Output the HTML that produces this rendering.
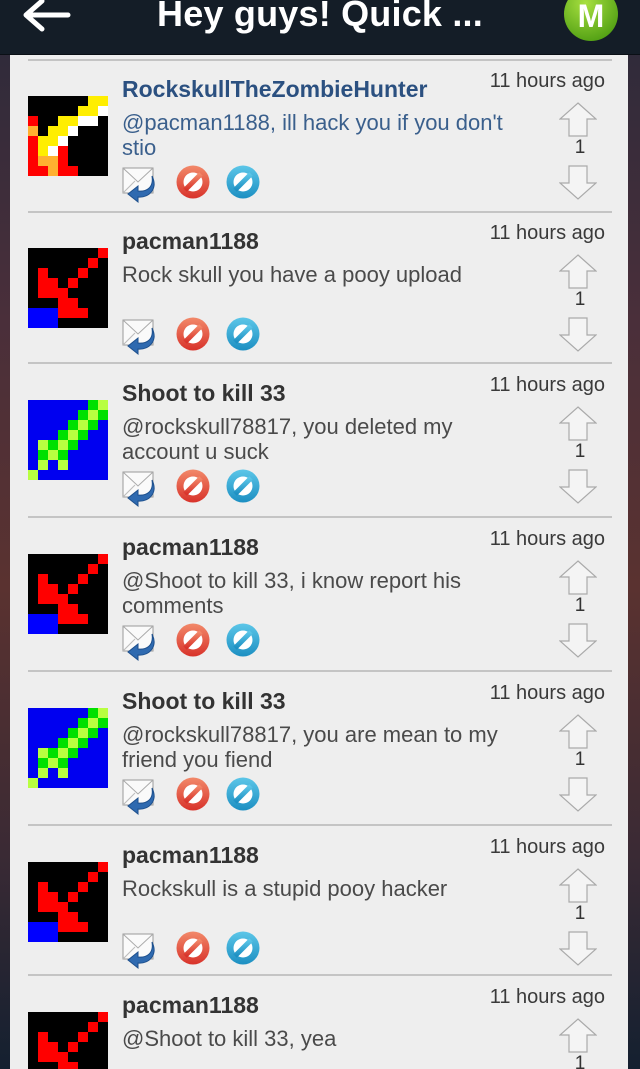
<!DOCTYPE html>
<html><head><meta charset="utf-8">
<style>
*{margin:0;padding:0;box-sizing:border-box}
html,body{width:640px;height:1069px;overflow:hidden}
body{position:relative;font-family:"Liberation Sans",Arial,sans-serif;
background:linear-gradient(#2b2a3a 0%,#4a2f3a 30%,#5a3230 55%,#3a2a34 80%,#142030 100%)}
.hdr{position:absolute;left:0;top:0;width:640px;height:55px;background:#141d27;border-bottom:1px solid #0a0f15}
.title{position:absolute;left:0;width:640px;top:-7px;text-align:center;color:#fff;font-size:36px;font-weight:bold;letter-spacing:0.2px}
.card{position:absolute;left:10px;top:55px;width:618px;height:1014px;background:#eeeeee}
.sep{position:absolute;left:28px;width:584px;height:2px;background:#c4c4c4}
.e{position:absolute;left:0;width:640px;height:152px}
.av{position:absolute;left:28px;top:36px;width:80px;height:80px}
.nm{position:absolute;left:122px;top:16px;font-size:23px;font-weight:bold;color:#333;line-height:26px;white-space:nowrap}
.cm{position:absolute;left:122px;top:50px;font-size:22px;color:#4a4a4a;line-height:25px;width:420px;white-space:nowrap}
.tm{position:absolute;right:35px;top:10px;font-size:20px;color:#3a3a3a;white-space:nowrap}
.ic{position:absolute;top:104px;left:122px}
.up{position:absolute;left:559px;top:42px}
.dn{position:absolute;left:559px;top:105px}
.ct{position:absolute;left:568px;width:24px;text-align:center;top:77px;font-size:19px;color:#333}
</style></head><body>
<svg width="0" height="0" style="position:absolute">
<defs>
<linearGradient id="rg" x1="0" y1="0" x2="0" y2="1"><stop offset="0" stop-color="#f2896a"/><stop offset="1" stop-color="#d8322a"/></linearGradient>
<linearGradient id="bg" x1="0" y1="0" x2="0" y2="1"><stop offset="0" stop-color="#5cc6e8"/><stop offset="1" stop-color="#1c8fc2"/></linearGradient>
<symbol id="icons" viewBox="0 0 140 40">
<rect x="1" y="4" width="30" height="25" fill="#fafafa" stroke="#999" stroke-width="1"/>
<path d="M1 4 L16 18 L31 4" fill="none" stroke="#aaa" stroke-width="1"/>
<path d="M1 29 L13 17" stroke="#bbb" fill="none"/>
<path d="M30 12 C32 24 24 28 16 27 L16 22 L6 30 L16 38 L16 33 C28 34 36 24 30 12 Z" fill="#2f6ab0" stroke="#1d4f8c" stroke-width="1"/>
<circle cx="71" cy="18" r="16.5" fill="url(#rg)"/>
<circle cx="71" cy="18" r="9.5" fill="#fff"/>
<path d="M63 26 L79 10" stroke="url(#rg)" stroke-width="5"/>
<circle cx="121" cy="18" r="16.5" fill="url(#bg)"/>
<circle cx="121" cy="18" r="9.5" fill="#fff"/>
<path d="M113 26 L129 10" stroke="url(#bg)" stroke-width="5"/>
</symbol>
<symbol id="ua" viewBox="0 0 38 35"><path d="M19 1 L37 17 L28 17 L28 34 L10 34 L10 17 L1 17 Z" fill="#f4f4f4" stroke="#aaa" stroke-width="1.2"/></symbol>
<symbol id="da" viewBox="0 0 38 35"><path d="M10 1 L28 1 L28 18 L37 18 L19 34 L1 18 L10 18 Z" fill="#f4f4f4" stroke="#aaa" stroke-width="1.2"/></symbol>
<symbol id="pac" viewBox="0 0 8 8" shape-rendering="crispEdges">
<rect width="8" height="8" fill="#000"/>
<g fill="#f00"><rect x="7" y="0" width="1" height="1"/><rect x="6" y="1" width="1" height="1"/><rect x="1" y="2" width="1" height="1"/><rect x="5" y="2" width="1" height="1"/><rect x="1" y="3" width="2" height="1"/><rect x="4" y="3" width="1" height="1"/><rect x="1" y="4" width="3" height="1"/><rect x="3" y="5" width="2" height="1"/><rect x="3" y="6" width="3" height="1"/></g>
<rect x="0" y="6" width="3" height="2" fill="#00f"/>
</symbol>
<symbol id="sho" viewBox="0 0 8 8" shape-rendering="crispEdges">
<rect width="8" height="8" fill="#0000f0"/>
<g fill="#00e000"><rect x="6" y="0" width="1" height="1"/><rect x="5" y="1" width="1" height="1"/><rect x="7" y="1" width="1" height="1"/><rect x="4" y="2" width="1" height="1"/><rect x="6" y="2" width="1" height="1"/><rect x="3" y="3" width="1" height="1"/><rect x="5" y="3" width="1" height="1"/><rect x="2" y="4" width="1" height="1"/><rect x="4" y="4" width="1" height="1"/><rect x="1" y="5" width="1" height="1"/><rect x="3" y="5" width="1" height="1"/></g>
<g fill="#b8ff40"><rect x="7" y="0" width="1" height="1"/><rect x="6" y="1" width="1" height="1"/><rect x="5" y="2" width="1" height="1"/><rect x="4" y="3" width="1" height="1"/><rect x="1" y="4" width="1" height="1"/><rect x="3" y="4" width="1" height="1"/><rect x="2" y="5" width="1" height="1"/><rect x="1" y="6" width="1" height="1"/><rect x="3" y="6" width="1" height="1"/><rect x="0" y="7" width="1" height="1"/></g>
</symbol>
<symbol id="rock" viewBox="0 0 8 8" shape-rendering="crispEdges">
<rect width="8" height="8" fill="#000"/>
<g fill="#ffee00"><rect x="6" y="0" width="2" height="1"/><rect x="5" y="1" width="2" height="1"/><rect x="3" y="2" width="2" height="1"/><rect x="2" y="3" width="2" height="1"/><rect x="1" y="4" width="2" height="1"/><rect x="1" y="5" width="1" height="1"/></g>
<g fill="#fff"><rect x="7" y="1" width="1" height="1"/><rect x="5" y="2" width="2" height="1"/><rect x="4" y="3" width="1" height="1"/><rect x="3" y="4" width="1" height="1"/><rect x="2" y="5" width="1" height="1"/></g>
<g fill="#f00"><rect x="0" y="2" width="1" height="1"/><rect x="0" y="4" width="1" height="4"/><rect x="3" y="5" width="1" height="3"/><rect x="1" y="7" width="1" height="1"/><rect x="4" y="7" width="1" height="1"/></g>
<g fill="#ffb030"><rect x="0" y="3" width="1" height="1"/><rect x="1" y="6" width="2" height="1"/><rect x="2" y="7" width="1" height="1"/></g>
</symbol>
</defs></svg>

<div class="card"></div>
<div class="hdr">
<svg style="position:absolute;left:20px;top:0" width="52" height="34" viewBox="0 0 52 34"><path d="M48 15 L8 15 M22 1 L6 15 L22 29" stroke="#fff" stroke-width="5" fill="none" stroke-linecap="round" stroke-linejoin="round"/></svg>
<div class="title">Hey guys! Quick ...</div>
<svg style="position:absolute;left:562px;top:-14px" width="58" height="56" viewBox="0 0 58 56"><defs><radialGradient id="gg" cx="0.4" cy="0.3" r="0.8"><stop offset="0" stop-color="#a8e040"/><stop offset="1" stop-color="#4a9a10"/></radialGradient></defs><ellipse cx="29" cy="28" rx="27" ry="27" fill="url(#gg)"/><text x="29" y="41" text-anchor="middle" font-family="Liberation Sans" font-weight="bold" font-size="32" fill="#fff">M</text></svg>
</div>

<div class="sep" style="top:59px"></div>
<div class="sep" style="top:211px"></div>
<div class="sep" style="top:362px"></div>
<div class="sep" style="top:516px"></div>
<div class="sep" style="top:670px"></div>
<div class="sep" style="top:824px"></div>
<div class="sep" style="top:974px"></div>

<div class="e" style="top:60px">
<svg class="av"><use href="#rock"/></svg>
<div class="nm" style="color:#2b5080">RockskullTheZombieHunter</div>
<div class="cm" style="color:#3a5f8c">@pacman1188, ill hack you if you don't<br>stio</div>
<div class="tm">11 hours ago</div>
<svg class="ic" width="140" height="40"><use href="#icons"/></svg>
<svg class="up" width="38" height="35"><use href="#ua"/></svg><div class="ct">1</div><svg class="dn" width="38" height="35"><use href="#da"/></svg>
</div>

<div class="e" style="top:212px">
<svg class="av"><use href="#pac"/></svg>
<div class="nm">pacman1188</div>
<div class="cm">Rock skull you have a pooy upload</div>
<div class="tm">11 hours ago</div>
<svg class="ic" width="140" height="40"><use href="#icons"/></svg>
<svg class="up" width="38" height="35"><use href="#ua"/></svg><div class="ct">1</div><svg class="dn" width="38" height="35"><use href="#da"/></svg>
</div>

<div class="e" style="top:364px">
<svg class="av"><use href="#sho"/></svg>
<div class="nm">Shoot to kill 33</div>
<div class="cm">@rockskull78817, you deleted my<br>account u suck</div>
<div class="tm">11 hours ago</div>
<svg class="ic" width="140" height="40"><use href="#icons"/></svg>
<svg class="up" width="38" height="35"><use href="#ua"/></svg><div class="ct">1</div><svg class="dn" width="38" height="35"><use href="#da"/></svg>
</div>

<div class="e" style="top:518px">
<svg class="av"><use href="#pac"/></svg>
<div class="nm">pacman1188</div>
<div class="cm">@Shoot to kill 33, i know report his<br>comments</div>
<div class="tm">11 hours ago</div>
<svg class="ic" width="140" height="40"><use href="#icons"/></svg>
<svg class="up" width="38" height="35"><use href="#ua"/></svg><div class="ct">1</div><svg class="dn" width="38" height="35"><use href="#da"/></svg>
</div>

<div class="e" style="top:672px">
<svg class="av"><use href="#sho"/></svg>
<div class="nm">Shoot to kill 33</div>
<div class="cm">@rockskull78817, you are mean to my<br>friend you fiend</div>
<div class="tm">11 hours ago</div>
<svg class="ic" width="140" height="40"><use href="#icons"/></svg>
<svg class="up" width="38" height="35"><use href="#ua"/></svg><div class="ct">1</div><svg class="dn" width="38" height="35"><use href="#da"/></svg>
</div>

<div class="e" style="top:826px">
<svg class="av"><use href="#pac"/></svg>
<div class="nm">pacman1188</div>
<div class="cm">Rockskull is a stupid pooy hacker</div>
<div class="tm">11 hours ago</div>
<svg class="ic" width="140" height="40"><use href="#icons"/></svg>
<svg class="up" width="38" height="35"><use href="#ua"/></svg><div class="ct">1</div><svg class="dn" width="38" height="35"><use href="#da"/></svg>
</div>

<div class="e" style="top:976px;height:93px;overflow:hidden">
<svg class="av"><use href="#pac"/></svg>
<div class="nm">pacman1188</div>
<div class="cm">@Shoot to kill 33, yea</div>
<div class="tm">11 hours ago</div>
<svg class="up" width="38" height="35"><use href="#ua"/></svg><div class="ct">1</div>
</div>
</body></html>
